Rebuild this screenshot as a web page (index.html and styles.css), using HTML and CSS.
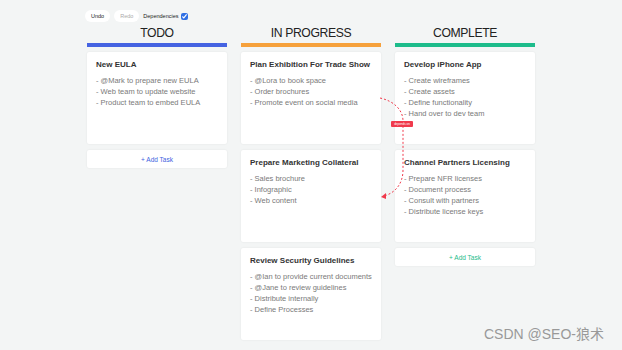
FILE: index.html
```html
<!DOCTYPE html>
<html lang="en">
<head>
  <meta charset="UTF-8" />
  <meta name="viewport" content="width=device-width, initial-scale=1.0"/>
  <title>Kanban Board</title>
  <link rel="stylesheet" href="styles.css">
</head>
<body>
  <div class="page">
    <div class="toolbar">
      <button class="tool-btn">Undo</button>
      <button class="tool-btn disabled">Redo</button>
      <label class="deps">Dependencies <input type="checkbox" checked></label>
    </div>

    <div class="board">
      <div class="column">
        <h2 class="col-title">TODO</h2>
        <div class="col-bar bar-todo"></div>
        <div class="card">
          <div class="card-title">New EULA</div>
          <ul class="card-list">
            <li>- @Mark to prepare new EULA</li>
            <li>- Web team to update website</li>
            <li>- Product team to embed EULA</li>
          </ul>
        </div>
        <button class="add-task add-blue">+ Add Task</button>
      </div>

      <div class="column">
        <h2 class="col-title">IN PROGRESS</h2>
        <div class="col-bar bar-progress"></div>
        <div class="card">
          <div class="card-title">Plan Exhibition For Trade Show</div>
          <ul class="card-list">
            <li>- @Lora to book space</li>
            <li>- Order brochures</li>
            <li>- Promote event on social media</li>
          </ul>
        </div>
        <div class="card">
          <div class="card-title">Prepare Marketing Collateral</div>
          <ul class="card-list">
            <li>- Sales brochure</li>
            <li>- Infographic</li>
            <li>- Web content</li>
          </ul>
        </div>
        <div class="card">
          <div class="card-title">Review Security Guidelines</div>
          <ul class="card-list">
            <li>- @Ian to provide current documents</li>
            <li>- @Jane to review guidelines</li>
            <li>- Distribute internally</li>
            <li>- Define Processes</li>
          </ul>
        </div>
      </div>

      <div class="column">
        <h2 class="col-title">COMPLETE</h2>
        <div class="col-bar bar-complete"></div>
        <div class="card">
          <div class="card-title">Develop iPhone App</div>
          <ul class="card-list">
            <li>- Create wireframes</li>
            <li>- Create assets</li>
            <li>- Define functionality</li>
            <li>- Hand over to dev team</li>
          </ul>
        </div>
        <div class="card">
          <div class="card-title">Channel Partners Licensing</div>
          <ul class="card-list">
            <li>- Prepare NFR licenses</li>
            <li>- Document process</li>
            <li>- Consult with partners</li>
            <li>- Distribute license keys</li>
          </ul>
        </div>
        <button class="add-task add-green">+ Add Task</button>
      </div>
    </div>

    <!-- dependency link drawn over the board -->
    <svg class="links" width="622" height="350" viewBox="0 0 622 350">
      <path d="M380 98 C 394 101, 403 110, 403 121 L 403 170 C 403 184, 395 193, 384 196"
            fill="none" stroke="#f03a4c" stroke-width="1" stroke-dasharray="2 2"/>
      <path d="M381 197 L 386 193 L 386 199 Z" fill="#f03a4c"/>
    </svg>
    <span class="link-badge">depends on</span>

    <div class="watermark">CSDN @SEO-狼术</div>
  </div>
</body>
</html>
```

FILE: styles.css
```css
body {
  margin: 0;
  background-color: #f3f5f5;
  font-family: "Liberation Sans", Arial, sans-serif;
  color: #333;
}

.page {
  position: relative;
  width: 622px;
  height: 350px;
  overflow: hidden;
}

.toolbar {
  width: 452px;
  margin: 0 auto;
  padding-top: 10px;
  display: flex;
  align-items: center;
  gap: 4px;
}

.tool-btn {
  height: 12px;
  padding: 0 6px;
  font-family: inherit;
  font-size: 5.5px;
  color: #222;
  background-color: #fff;
  border: none;
  border-radius: 6px;
}

.tool-btn.disabled {
  color: #aaa;
}

.deps {
  display: flex;
  align-items: center;
  gap: 3px;
  font-size: 5.5px;
  color: #222;
}

.deps input {
  width: 7px;
  height: 7px;
  margin: 0;
  accent-color: #2f6fe4;
}

.board {
  width: 448px;
  margin: 3px auto 0;
  display: grid;
  grid-template-columns: repeat(3, 140px);
  gap: 14px;
  align-items: start;
}

.column {
  display: flex;
  flex-direction: column;
  gap: 6px;
}

.col-title {
  margin: 0 0 -4px;
  font-size: 12.2px;
  line-height: 16px;
  font-weight: normal;
  letter-spacing: -0.4px;
  text-align: center;
  color: #222;
}

.col-bar {
  height: 4px;
  margin-bottom: -1px;
}

.bar-todo { background-color: #4563e2; }
.bar-progress { background-color: #f6a13c; }
.bar-complete { background-color: #1dbc8b; }

.card {
  box-sizing: border-box;
  height: 92px;
  padding: 8px 4px 8px 9px;
  background-color: #fff;
  border-radius: 2px;
  box-shadow: 0 0 2px rgba(0, 0, 0, 0.08);
}

.card-title {
  font-size: 8px;
  line-height: 10px;
  font-weight: bold;
  color: #333;
}

.card-list {
  list-style: none;
  margin: 5px 0 0;
  padding: 0;
  font-size: 7.5px;
  line-height: 11px;
  color: #7a7a7a;
  white-space: nowrap;
}

.add-task {
  height: 18px;
  font-family: inherit;
  font-size: 6.5px;
  background-color: #fff;
  border: none;
  border-radius: 2px;
  box-shadow: 0 0 2px rgba(0, 0, 0, 0.08);
}

.add-blue { color: #3d5fe0; }
.add-green { color: #1dbc8b; }

.links {
  position: absolute;
  left: 0;
  top: 0;
  pointer-events: none;
}

.link-badge {
  position: absolute;
  left: 391px;
  top: 121px;
  width: 22px;
  height: 6px;
  background-color: #f03a4c;
  border-radius: 1px;
  color: #fff;
  font-size: 3px;
  line-height: 6px;
  text-align: center;
}

.watermark {
  position: absolute;
  right: 18px;
  top: 323px;
  font-family: "Liberation Sans", "Noto Sans CJK SC", sans-serif;
  font-size: 14px;
  color: #999;
}
```
